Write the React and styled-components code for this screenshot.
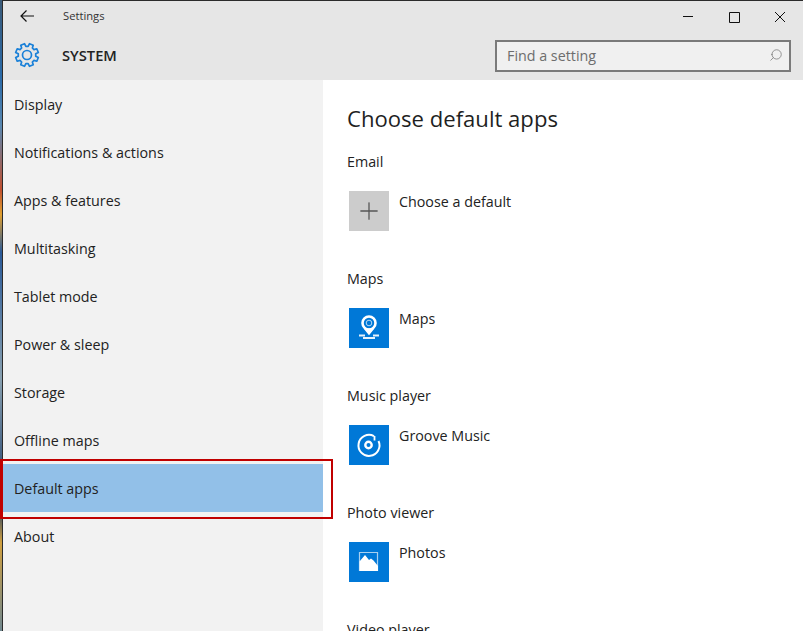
import React from "react";
import styled, { createGlobalStyle } from "styled-components";
import { Plus, Search } from "lucide-react";

const Global = createGlobalStyle`
  html, body {
    margin: 0;
    height: 100%;
    overflow: hidden;
    background: #fff;
  }
  #root {
    height: 100%;
  }
`;

const Desktop = styled.div`
  position: relative;
  display: flex;
  width: 803px;
  height: 631px;
  overflow: hidden;
  font-family: "Open Sans", "Noto Sans", sans-serif;
  font-size: 14.3px;
  color: #222;
`;

const Wallpaper = styled.div`
  flex: 0 0 2px;
  background: linear-gradient(
    to bottom,
    #3a5a78 0%,
    #2a6aa8 12%,
    #5a88b0 20%,
    #c05030 30%,
    #e0a030 34%,
    #2a5a98 40%,
    #88a0b0 60%,
    #1a3a68 80%,
    #d0a040 86%,
    #708890 100%
  );
`;

const Window = styled.div`
  flex: 1;
  display: flex;
  flex-direction: column;
  border-left: 1px solid #2b2b2b;
  border-top: 1px solid #2b2b2b;
  min-width: 0;
`;

const Header = styled.header`
  flex: 0 0 79px;
  display: flex;
  flex-direction: column;
  background: #e6e6e6;
`;

const TitleBar = styled.div`
  flex: 0 0 31px;
  display: flex;
  align-items: center;
`;

const BackButton = styled.svg`
  margin: 0 0 1px 17px;
  width: 14px;
  height: 12px;
`;

const WindowTitle = styled.span`
  margin-left: 29px;
  padding-bottom: 2px;
  font-size: 11.2px;
  color: #333;
`;

const WindowButtons = styled.div`
  margin-left: auto;
  display: flex;
`;

const WindowButton = styled.svg`
  width: 46px;
  height: 12px;
`;

const SystemBar = styled.div`
  flex: 1;
  display: flex;
  align-items: center;
`;

const SystemIcon = styled.svg`
  margin: 0 0 2px 11px;
  width: 26px;
  height: 26px;
`;

const SystemTitle = styled.span`
  margin-left: 22px;
  padding-bottom: 2px;
  font-size: 14.7px;
  font-weight: 600;
  color: #222;
`;

const SearchBox = styled.div`
  margin-left: auto;
  margin-right: 12px;
  width: 296px;
  height: 32px;
  box-sizing: border-box;
  border: 2px solid #7a7a7a;
  background: #f0f0f0;
  display: flex;
  align-items: center;
  justify-content: space-between;
  padding: 0 6px 2px 10px;
  color: #6d6d6d;
`;

const SearchIcon = styled(Search)`
  transform: scaleX(-1);
`;

const Body = styled.div`
  flex: 1;
  display: flex;
  min-height: 0;
`;

const Sidebar = styled.nav`
  flex: 0 0 320px;
  background: #f2f2f2;
  display: flex;
  flex-direction: column;
`;

const NavItem = styled.div`
  flex: 0 0 48px;
  display: flex;
  align-items: center;
  padding-left: 11px;
  background: ${(p) => (p.$active ? "#92c0e8" : "transparent")};
`;

const Content = styled.main`
  flex: 1;
  background: #fff;
  padding: 22px 0 0 24px;
  overflow: hidden;
`;

const Heading = styled.h1`
  margin: 0 0 18px;
  font-size: 22.1px;
  line-height: 32px;
  font-weight: 400;
  color: #1f1f1f;
`;

const Section = styled.section`
  height: 117px;
`;

const SectionLabel = styled.div`
  line-height: 20px;
  height: 20px;
  margin-bottom: 19px;
`;

const AppRow = styled.div`
  display: flex;
  gap: 10px;
  margin-left: 2px;
`;

const Tile = styled.div`
  width: 40px;
  height: 40px;
  display: flex;
  align-items: center;
  justify-content: center;
  background: ${(p) => (p.$empty ? "#cccccc" : "#0078d7")};
`;

const AppName = styled.span`
  padding-top: 1px;
  line-height: 20px;
`;

const Annotation = styled.div`
  position: absolute;
  left: 0;
  top: 459px;
  width: 333px;
  height: 60px;
  box-sizing: border-box;
  border: 2px solid #c00000;
  border-left-width: 3px;
  pointer-events: none;
`;

// 8 tooth gear outline, centred on 13,13
const gearPath = () => {
  const pt = (r, deg) => {
    const a = (deg * Math.PI) / 180;
    return `${(13 + r * Math.cos(a)).toFixed(2)} ${(13 + r * Math.sin(a)).toFixed(2)}`;
  };
  let d = "";
  for (let i = 0; i < 8; i++) {
    const c = i * 45 - 22.5;
    d += `${i ? "L" : "M"}${pt(8.8, c - 15)} L${pt(11.6, c - 10)} L${pt(11.6, c + 10)} L${pt(8.8, c + 15)} `;
  }
  return d + "Z";
};

const MapsGlyph = () => (
  <svg width="40" height="40" viewBox="0 0 40 40" fill="none" stroke="#fff">
    <circle cx="20" cy="15" r="6.500" strokeWidth="2.600" />
    <circle cx="20" cy="15" r="2.800" strokeWidth="1" strokeOpacity="0.7" />
    <path d="M15.500 20.500 20 26l4.500-5.500" fill="#fff" strokeWidth="1.500" />
    <path d="M10 27.500h6M24 27.500h6M14 30h12" strokeWidth="2" strokeOpacity="0.9" />
  </svg>
);

const MusicGlyph = () => (
  <svg width="40" height="40" viewBox="0 0 40 40" fill="none" stroke="#fff">
    <path d="M25 11.200A10.500 10.500 0 1 0 29.500 16" strokeWidth="2" />
    <circle cx="19.500" cy="20" r="3.200" strokeWidth="2.400" />
    <path d="M25.500 11v4.500" strokeWidth="1.800" />
  </svg>
);

const PhotosGlyph = () => (
  <svg width="40" height="40" viewBox="0 0 40 40">
    <path d="M10.500 10.500h18v18h-18z" fill="none" stroke="#a8d0f0" strokeWidth="1.200" />
    <path d="M10.500 29v-9.500L16 13l4 5 2-1.500 2.500 2 4.500 5.500V29z" fill="#fff" />
  </svg>
);

const navItems = [
  "Display",
  "Notifications & actions",
  "Apps & features",
  "Multitasking",
  "Tablet mode",
  "Power & sleep",
  "Storage",
  "Offline maps",
  "Default apps",
  "About",
];

const sections = [
  { label: "Email", app: "Choose a default", empty: true, icon: <Plus size={28} color="#555" strokeWidth={1.100} /> },
  { label: "Maps", app: "Maps", icon: <MapsGlyph /> },
  { label: "Music player", app: "Groove Music", icon: <MusicGlyph /> },
  { label: "Photo viewer", app: "Photos", icon: <PhotosGlyph /> },
  { label: "Video player" },
];

const App = () => {
  return (
    <Desktop>
      <Global />
      <Wallpaper />
      <Window>
        <Header>
          <TitleBar>
            <BackButton viewBox="0 0 14 12" fill="none" stroke="#111" strokeWidth="1.200">
              <path d="M1 6h13M6.500.5 1 6l5.500 5.500" />
            </BackButton>
            <WindowTitle>Settings</WindowTitle>
            <WindowButtons>
              <WindowButton viewBox="0 0 46 12" fill="none" stroke="#111" strokeWidth="1">
                <path d="M18 5.500h10" />
              </WindowButton>
              <WindowButton viewBox="0 0 46 12" fill="none" stroke="#111" strokeWidth="1">
                <path d="M18.500 1.500h10v10h-10z" />
              </WindowButton>
              <WindowButton viewBox="0 0 46 12" fill="none" stroke="#111" strokeWidth="1">
                <path d="M18 1l10 10M28 1 18 11" />
              </WindowButton>
            </WindowButtons>
          </TitleBar>
          <SystemBar>
            <SystemIcon viewBox="0 0 26 26" fill="none" stroke="#1a80d8" strokeWidth="1.700">
              <path d={gearPath()} strokeLinejoin="round" />
              <circle cx="13" cy="13" r="4.500" />
            </SystemIcon>
            <SystemTitle>SYSTEM</SystemTitle>
            <SearchBox>
              Find a setting
              <SearchIcon size={14} color="#777" strokeWidth={1.300} />
            </SearchBox>
          </SystemBar>
        </Header>
        <Body>
          <Sidebar>
            {navItems.map((item) => (
              <NavItem key={item} $active={item === "Default apps"}>
                {item}
              </NavItem>
            ))}
          </Sidebar>
          <Content>
            <Heading>Choose default apps</Heading>
            {sections.map((s) => (
              <Section key={s.label}>
                <SectionLabel>{s.label}</SectionLabel>
                {s.app && (
                  <AppRow>
                    <Tile $empty={s.empty}>{s.icon}</Tile>
                    <AppName>{s.app}</AppName>
                  </AppRow>
                )}
              </Section>
            ))}
          </Content>
        </Body>
      </Window>
      <Annotation />
    </Desktop>
  );
};

export default App;
